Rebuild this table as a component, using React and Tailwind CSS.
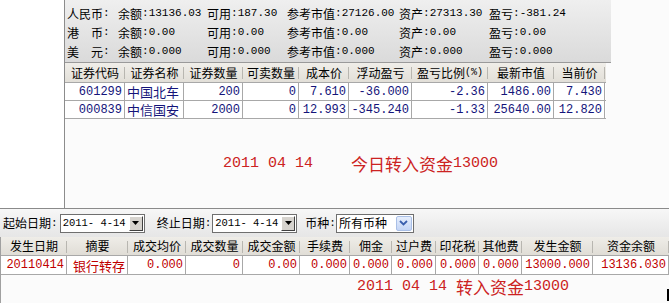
import React from "react";

const MONO = "font-['Liberation_Mono',monospace]";

function Num({ children, cls = "text-[11px]" }) {
  return <span className={`${MONO} ${cls} whitespace-pre`}>{children}</span>;
}

const infoRows = [
  { label: ["人民币"], vals: ["13136.03", "187.30", "27126.00", "27313.30", "-381.24"] },
  { label: ["港", "币"], vals: ["0.00", "0.00", "0.00", "0.00", "0.00"] },
  { label: ["美", "元"], vals: ["0.000", "0.000", "0.000", "0.000", "0.000"] },
];
const infoKeys = ["余额", "可用", "参考市值", "资产", "盈亏"];
const infoW = ["w-[89px]", "w-[80px]", "w-[112px]", "w-[90px]", "w-[80px]"];

const topCols = [60, 59, 59, 56, 50, 63, 76, 66, 51];
const topHead = ["证券代码", "证券名称", "证券数量", "可卖数量", "成本价", "浮动盈亏", "盈亏比例(%)", "最新市值", "当前价"];
const topRows = [
  ["601299", "中国北车", "200", "0", "7.610", "-36.000", "-2.36", "1486.00", "7.430"],
  ["000839", "中信国安", "2000", "0", "12.993", "-345.240", "-1.33", "25640.00", "12.820"],
];

const botCols = [66, 61, 58, 57, 57, 50, 42, 44, 43, 43, 71, 76];
const botHead = ["发生日期", "摘要", "成交均价", "成交数量", "成交金额", "手续费", "佣金", "过户费", "印花税", "其他费", "发生金额", "资金余额"];
const botRow = ["20110414", "银行转存", "0.000", "0", "0.00", "0.000", "0.000", "0.000", "0.000", "0.000", "13000.000", "13136.030"];

function HeadCell({ w, text }) {
  const m = text.match(/^(.*?)(\(%\))?$/);
  return (
    <div className="relative flex h-full items-center justify-center" style={{ width: w }}>
      <span className="text-[12px]">{m[1]}</span>
      {m[2] && <Num cls="text-[10px]">(%)</Num>}
      <div className="absolute right-0 top-[4px] h-[12px] w-[1px] bg-[#b8b6b0]" />
    </div>
  );
}

function isCJK(s) {
  return /[\u4e00-\u9fff]/.test(s);
}

function Combo({ w, text, blue }) {
  return (
    <div className={`flex h-[19px] items-stretch border border-[#6f6f6f] bg-white ${w}`}>
      <div className="flex flex-1 items-center pl-[2px]">
        {isCJK(text) ? <span className="text-[12px]">{text}</span> : <Num cls="text-[10.5px]">{text}</Num>}
      </div>
      {blue ? (
        <div className="m-[1px] flex w-[16px] items-center justify-center rounded-[2px] border border-[#a9bfe6] bg-linear-to-b from-[#e6eefc] to-[#c4d5f6]">
          <svg width="9" height="6" viewBox="0 0 9 6">
            <path d="M1 1 L4.5 4.5 L8 1" stroke="#3a5fae" strokeWidth="1.8" fill="none" />
          </svg>
        </div>
      ) : (
        <div className="m-[1px] flex w-[14px] items-center justify-center border-t border-l border-t-white border-l-white border-r border-b border-r-[#404040] border-b-[#404040] bg-[#d6d3ce]">
          <svg width="7" height="4" viewBox="0 0 7 4">
            <path d="M0 0 L7 0 L3.5 4 Z" fill="#000" />
          </svg>
        </div>
      )}
    </div>
  );
}

export default function App() {
  return (
    <div className="flex h-[303px] w-[669px] flex-col overflow-hidden bg-white text-black font-['Noto_Sans_CJK_SC',sans-serif] leading-none">
      {/* top section */}
      <div className="flex h-[208px] shrink-0">
        <div className="w-[64px] bg-white" />
        <div className="flex flex-1 flex-col border-l border-[#8c8c8c] bg-[#fbfbfb]">
          <div className="flex h-[63px] w-[546px] flex-col border-b border-[#9a9a9a] bg-linear-to-b from-[#efefef] to-[#dadada] pl-[2px] pt-[4px]">
            {infoRows.map((r, i) => (
              <div key={i} className="flex h-[19px] items-center">
                <div className="flex w-[51px] items-center">
                  <div className="flex w-[36px] justify-between text-[12px]">
                    {r.label.map((l, j) => (
                      <span key={j}>{l}</span>
                    ))}
                  </div>
                  <Num>:</Num>
                </div>
                {r.vals.map((v, j) => (
                  <div key={j} className={`flex items-center ${infoW[j]}`}>
                    <span className="text-[12px]">{infoKeys[j]}</span>
                    <Num>:{v}</Num>
                  </div>
                ))}
              </div>
            ))}
          </div>
          <div className="flex h-[20px] w-[541px] border-b border-[#a8a8a8] bg-linear-to-b from-[#f0eee9] to-[#e2dfd8]">
            {topHead.map((h, i) => (
              <HeadCell key={i} w={topCols[i]} text={h} />
            ))}
          </div>
          {topRows.map((r, i) => (
            <div key={i} className="flex h-[18px] w-[541px] border-b border-[#a8a8a8] bg-white text-[#14147a]">
              {r.map((c, j) => (
                <div
                  key={j}
                  className={`flex h-full items-center border-r border-[#a8a8a8] pr-[2px] ${j === 1 ? "justify-center" : "justify-end"}`}
                  style={{ width: topCols[j] }}
                >
                  {j === 1 ? <span className="text-[13px]">{c}</span> : <Num cls="text-[12px]">{c}</Num>}
                </div>
              ))}
            </div>
          ))}
          <div className="mt-[36px] flex items-center pl-[158px] text-[#cc2222]">
            <Num cls="text-[15px]">2011 04 14</Num>
            <span className="ml-[38px] text-[17px]">今日转入资金</span>
            <Num cls="text-[15px]">13000</Num>
          </div>
        </div>
      </div>

      {/* bottom section */}
      <div className="flex flex-1 flex-col border-t border-[#8a8a8a]">
        <div className="flex h-[28px] items-center bg-linear-to-b from-[#f7f7f7] to-[#e6e6e6] pl-[3px]">
          <span className="text-[12px]">起始日期</span>
          <Num>:</Num>
          <div className="ml-[2px]">
            <Combo w="w-[85px]" text="2011- 4-14" />
          </div>
          <span className="ml-[12px] text-[12px]">终止日期</span>
          <Num>:</Num>
          <div className="ml-[1px]">
            <Combo w="w-[85px]" text="2011- 4-14" />
          </div>
          <span className="ml-[8px] text-[12px]">币种</span>
          <Num>:</Num>
          <div className="ml-[0px]">
            <Combo w="w-[78px]" text="所有币种" blue />
          </div>
        </div>
        <div className="flex flex-1 flex-col border-l border-[#a0a0a0]">
          <div className="flex h-[19px] border-b border-[#a8a8a8] bg-linear-to-b from-[#efede8] to-[#e0ddd6]">
            {botHead.map((h, i) => (
              <HeadCell key={i} w={botCols[i]} text={h} />
            ))}
          </div>
          <div className="flex h-[19px] border-b border-[#a8a8a8] bg-white text-[#c00000]">
            {botRow.map((c, j) => (
              <div
                key={j}
                className="flex h-full items-center justify-end border-r border-[#a8a8a8] pr-[2px]"
                style={{ width: botCols[j] }}
              >
                {isCJK(c) ? <span className="text-[13px]">{c}</span> : <Num cls="text-[12px]">{c}</Num>}
              </div>
            ))}
          </div>
          <div className="flex flex-1 items-start bg-[#fbfbfb]">
            <div className="mt-[3px] flex items-center pl-[356px] text-[#cc2222]">
              <Num cls="text-[15px]">2011 04 14 </Num>
              <span className="text-[17px]">转入资金</span>
              <Num cls="text-[15px]">13000</Num>
            </div>
            <div className="ml-auto mt-[14px] h-[12px] w-[2px] bg-black" />
          </div>
        </div>
      </div>
    </div>
  );
}
